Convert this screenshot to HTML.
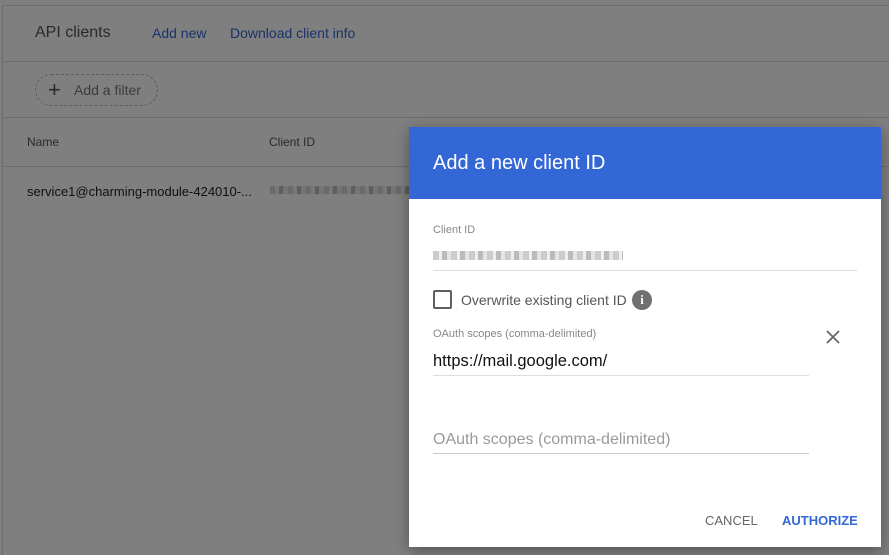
<!DOCTYPE html>
<html style="background:#7f7f7f"><head><style>
html,body{margin:0;width:889px;height:555px;overflow:hidden}
body{background:#fff;font-family:"Liberation Sans",sans-serif;position:relative}
.a{position:absolute}
.blur{position:absolute;height:8px;background:repeating-linear-gradient(90deg,#d4d4d4 0 5px,#f0f0f0 5px 9px,#bcbcbc 9px 13px,#e8e8e8 13px 18px)}
</style></head><body>
<div class="a" style="left:2px;top:5px;width:887px;height:560px;border-left:1px solid #ddd;border-top:1px solid #ddd"></div>
<div class="a" style="left:2px;top:61px;width:887px;border-top:1px solid #ddd"></div>
<div class="a" style="left:2px;top:117px;width:887px;border-top:1px solid #ddd"></div>
<div class="a" style="left:2px;top:166px;width:887px;border-top:1px solid #ddd"></div>
<div class="a" style="left:35px;top:24px;font-size:16px;color:#555">API clients</div>
<div class="a" style="left:152px;top:25px;font-size:14px;color:#3367d6">Add new</div>
<div class="a" style="left:230px;top:25px;font-size:14px;color:#3367d6">Download client info</div>
<div class="a" style="left:35px;top:74px;width:121px;height:30px;border:1px dashed #bbb;border-radius:16px"></div>
<div class="a" style="left:48px;top:77px;font-size:22px;color:#555">+</div>
<div class="a" style="left:74px;top:82px;font-size:14px;color:#777">Add a filter</div>
<div class="a" style="left:27px;top:135px;font-size:12px;color:#555">Name</div>
<div class="a" style="left:269px;top:135px;font-size:12px;color:#555">Client ID</div>
<div class="a" style="left:27px;top:184px;font-size:13px;color:#222">service1@charming-module-424010-...</div>
<div class="blur" style="left:270px;top:186px;width:139px"></div>
<div class="a" style="left:0;top:0;width:889px;height:555px;background:rgba(0,0,0,.5)"></div>

<div class="a" style="left:409px;top:127px;width:472px;height:420px;background:#fff;box-shadow:0 4px 14px rgba(0,0,0,.35)">
 <div style="height:72px;background:#3367d6;color:#fff;font-size:20px;padding:25px 0 0 24px;box-sizing:border-box">Add a new client ID</div>
 <div class="a" style="left:24px;top:97px;font-size:11px;color:#888">Client ID</div>
 <div class="a" style="left:24px;top:124px;width:190px;height:9px;background:repeating-linear-gradient(90deg,#ccc 0 6px,#eee 6px 9px,#bbb 9px 14px,#e4e4e4 14px 18px)"></div>
 <div class="a" style="left:24px;top:143px;width:424px;border-top:1px solid #ddd"></div>
 <div class="a" style="left:24px;top:163px;width:15px;height:15px;border:2px solid #5f5f5f;border-radius:2px"></div>
 <div class="a" style="left:52px;top:165px;font-size:14px;color:#555">Overwrite existing client ID</div>
 <div class="a" style="left:223px;top:163px;width:20px;height:20px;border-radius:50%;background:#707070;color:#fff;font-size:13px;font-weight:bold;text-align:center;line-height:20px;font-family:'Liberation Serif',serif">i</div>
 <div class="a" style="left:24px;top:201px;font-size:11px;color:#888">OAuth scopes (comma-delimited)</div>
 <svg class="a" style="left:416px;top:202px" width="16" height="16"><path d="M2 2L14 14M14 2L2 14" stroke="#666" stroke-width="1.8"/></svg>
 <div class="a" style="left:24px;top:225px;font-size:16.5px;color:#111">https://mail.google.com/</div>
 <div class="a" style="left:24px;top:248px;width:376px;border-top:1px solid #ddd"></div>
 <div class="a" style="left:24px;top:304px;font-size:16px;color:#9a9a9a">OAuth scopes (comma-delimited)</div>
 <div class="a" style="left:24px;top:326px;width:376px;border-top:1px solid #ccc"></div>
 <div class="a" style="left:296px;top:386px;font-size:13px;color:#666">CANCEL</div>
 <div class="a" style="left:373px;top:386px;font-size:13px;color:#3367d6;font-weight:bold">AUTHORIZE</div>
</div>
</body></html>
